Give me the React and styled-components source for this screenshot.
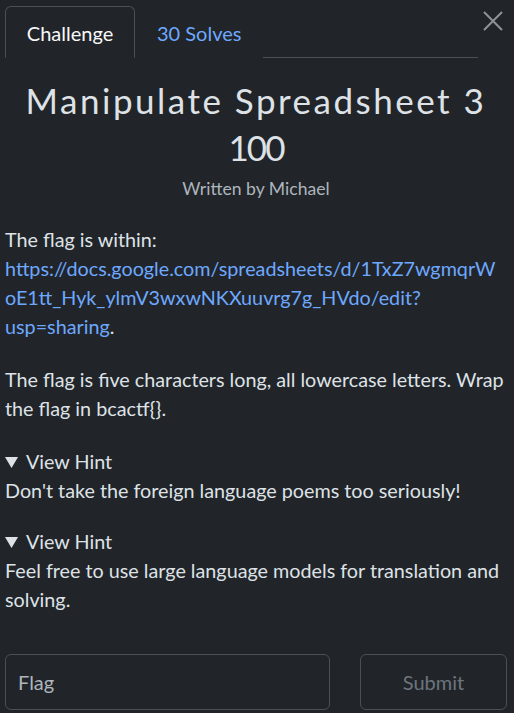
import React from 'react';
import styled, { createGlobalStyle } from 'styled-components';

const GlobalStyle = createGlobalStyle`
  html, body {
    margin: 0;
    padding: 0;
    background: #212529;
  }
  * { box-sizing: border-box; }
`;

function App() {
  return (
    <>
      <GlobalStyle />
      <Modal>
        <Header>
          <Tabs>
            <Tab active>Challenge</Tab>
            <Tab>30 Solves</Tab>
          </Tabs>
          <Close aria-label="close">
            <svg width="20" height="20" viewBox="0 0 20 20">
              <path d="M1 1 L19 19 M19 1 L1 19" stroke="#8f9296" strokeWidth="2" />
            </svg>
          </Close>
        </Header>

        <Title>Manipulate Spreadsheet 3</Title>
        <Points>100</Points>
        <Author>Written by Michael</Author>

        <Description>
          <Paragraph inset="6px">
            The flag is within:{' '}
            <Link href="#">
              https://docs.google.com/spreadsheets/d/1TxZ7wgmqrWoE1tt_Hyk_ylmV3wxwNKXuuvrg7g_HVdo/edit?usp=sharing
            </Link>
            .
          </Paragraph>
          <Paragraph>
            The flag is five characters long, all lowercase letters. Wrap the flag in bcactf{'{}'}.
          </Paragraph>
        </Description>

        <Hint open gap="22px">
          <summary>View Hint</summary>
          Don't take the foreign language poems too seriously!
        </Hint>
        <Hint open gap="40px">
          <summary>View Hint</summary>
          Feel free to use large language models for translation and solving.
        </Hint>

        <FlagForm onSubmit={e => e.preventDefault()}>
          <FlagInput placeholder="Flag" />
          <SubmitButton disabled>Submit</SubmitButton>
        </FlagForm>
      </Modal>
    </>
  );
}

const Modal = styled.div`
  width: 514px;
  height: 713px;
  padding: 6px 7px 0 5px;
  background: #212529;
  color: #dee2e6;
  font-family: Lato, 'Open Sans', sans-serif;
  font-size: 19.75px;
  line-height: 29px;
`;

const Header = styled.div`
  display: flex;
  align-items: flex-start;
`;

const Tabs = styled.div`
  display: flex;
  width: 473px;
  border-bottom: 1px solid #495057;
`;

const Tab = styled.div`
  width: ${props => (props.active ? '130px' : 'auto')};
  height: 52px;
  margin-bottom: -1px;
  padding: 2px 21px 0;
  display: flex;
  align-items: center;
  justify-content: center;
  font-size: 20px;
  color: ${props => (props.active ? '#f8f9fa' : '#6ea8fe')};
  background: #212529;
  border: 1px solid ${props => (props.active ? '#495057' : 'transparent')};
  border-bottom-color: ${props => (props.active ? '#212529' : 'transparent')};
  border-radius: 6px 6px 0 0;
`;

const Close = styled.button`
  margin: 5px 0 0 5px;
  padding: 0;
  border: none;
  background: none;
  width: 20px;
  height: 20px;
  cursor: pointer;
`;

const Title = styled.h1`
  margin: 21px 0 0;
  font-size: 35px;
  font-weight: 400;
  letter-spacing: 2.5px;
  line-height: 42px;
  text-align: center;
  color: #dee2e6;
`;

const Points = styled.div`
  margin-top: 5px;
  font-size: 35px;
  letter-spacing: -2px;
  line-height: 42px;
  text-align: center;
  color: #dee2e6;
`;

const Author = styled.div`
  margin-top: 10px;
  font-size: 17.6px;
  line-height: 21px;
  text-align: center;
  color: #adb5bd;
`;

const Description = styled.div`
  margin-top: 26px;
`;

const Paragraph = styled.p`
  margin: 0 0 24px;
  padding-right: ${props => props.inset || '0'};
  overflow-wrap: anywhere;
`;

const Link = styled.a`
  color: #6ea8fe;
  text-decoration: none;
`;

const Hint = styled.details`
  margin-bottom: ${props => props.gap};

  summary {
    cursor: pointer;
  }
`;

const FlagForm = styled.form`
  display: flex;
  gap: 30px;
`;

const FlagInput = styled.input`
  width: 325px;
  height: 56px;
  padding: 0 12px;
  font-family: Lato, sans-serif;
  font-size: 20px;
  background: transparent;
  border: 1px solid #495057;
  border-radius: 6px;
  color: #dee2e6;

  &::placeholder {
    color: #adb5bd;
  }
`;

const SubmitButton = styled.button`
  width: 147px;
  height: 56px;
  font-family: Lato, sans-serif;
  font-size: 20px;
  background: transparent;
  border: 1px solid #495057;
  border-radius: 6px;
  color: #6c757d;
`;

export default App;
